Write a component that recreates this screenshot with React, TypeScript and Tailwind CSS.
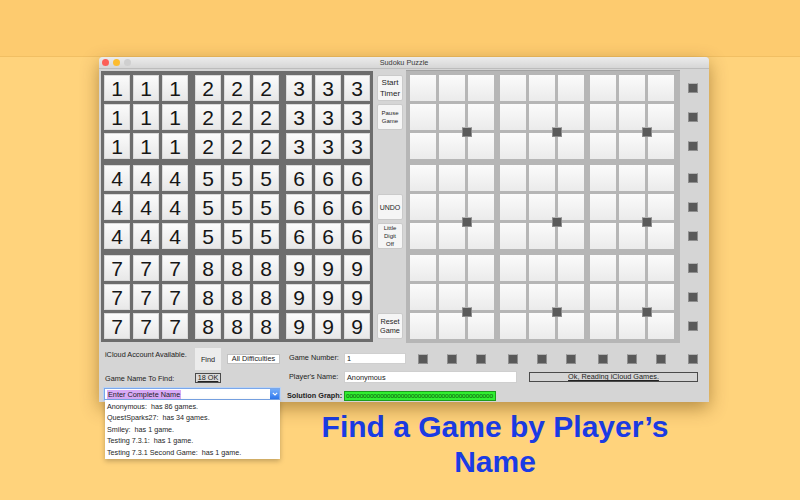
import React from "react";

const bands = [0, 1, 2];
const nine = Array.from({ length: 9 }, (_, i) => i);

// small dark square used for the note toggles
function Toggle() {
  return (
    <div className="w-[10px] h-[10px] bg-[#595959] border border-[#8e8e8e] border-t-[#b3b3b3]" />
  );
}

function NumberGrid() {
  return (
    <div className="ml-[2px] mt-[2px] bg-[#6d6d6d] pt-[4px] pb-[3px] px-[3px] flex flex-col gap-y-[6px]">
      {bands.map((br) => (
        <div key={br} className="flex gap-x-[7px]">
          {bands.map((bc) => (
            <div key={bc} className="grid grid-cols-3 gap-[3px]">
              {nine.map((i) => (
                <div
                  key={i}
                  className="w-[26px] h-[26px] flex items-center justify-center bg-linear-to-b from-[#fbfbfb] to-[#e8e8e8] border border-[#dadada] text-[21px] leading-none text-[#161616]"
                >
                  {br * 3 + bc + 1}
                </div>
              ))}
            </div>
          ))}
        </div>
      ))}
    </div>
  );
}

function NoteGrid() {
  return (
    <div className="ml-[3px] mt-[1px] bg-[#b6b6b6] border-t border-[#a2a2a2] pt-[4px] pb-[4px] pl-[4px] pr-[6px] flex flex-col gap-y-[6px]">
      {bands.map((br) => (
        <div key={br} className="flex gap-x-[6px]">
          {bands.map((bc) => (
            <div key={bc} className="relative grid grid-cols-3 gap-[3px]">
              {nine.map((i) => (
                <div
                  key={i}
                  className="w-[26px] h-[26px] bg-linear-to-b from-[#fbfbfb] to-[#ebebeb]"
                />
              ))}
              <div className="absolute left-[52px] top-[52px]">
                <Toggle />
              </div>
            </div>
          ))}
        </div>
      ))}
    </div>
  );
}

const sideButtons: (React.ReactNode | null)[] = [
  <span className="text-[8px] leading-[11px]">Start<br />Timer</span>,
  <span className="text-[6px] leading-[8px]">Pause<br />Game</span>,
  null,
  null,
  <span className="text-[7px] leading-[9px]">UNDO</span>,
  <span className="text-[6px] leading-[8px]">Little<br />Digit<br />Off</span>,
  null,
  null,
  <span className="text-[7.3px] leading-[9px]">Reset<br />Game</span>,
];

function SideButtons() {
  return (
    <div className="ml-[4px] mt-[6px] flex flex-col gap-y-[6px]">
      {bands.map((br) => (
        <div key={br} className="flex flex-col gap-y-[3px]">
          {bands.map((r) => {
            const label = sideButtons[br * 3 + r];
            return label ? (
              <button
                key={r}
                className="w-[26px] h-[26px] flex items-center justify-center text-center bg-[#f5f5f5] border border-[#cacaca] rounded-[2px] text-[#1e1e1e]"
              >
                {label}
              </button>
            ) : (
              <div key={r} className="w-[26px] h-[26px]" />
            );
          })}
        </div>
      ))}
    </div>
  );
}

function RowToggles() {
  return (
    <div className="ml-[8px] mt-[6px] flex flex-col gap-y-[6px]">
      {bands.map((br) => (
        <div key={br} className="flex flex-col gap-y-[3px]">
          {bands.map((r) => (
            <div key={r} className="h-[26px] flex items-center">
              <Toggle />
            </div>
          ))}
        </div>
      ))}
    </div>
  );
}

function ColumnToggles() {
  return (
    <div className="ml-[4px] flex items-center">
      <div className="flex gap-x-[6px]">
        {bands.map((b) => (
          <div key={b} className="flex gap-x-[3px]">
            {bands.map((c) => (
              <div key={c} className="w-[26px] flex justify-center">
                <Toggle />
              </div>
            ))}
          </div>
        ))}
      </div>
      <div className="ml-[14px]">
        <Toggle />
      </div>
    </div>
  );
}

const players = [
  "Anonymous:  has 86 games.",
  "QuestSparks27:  has 34 games.",
  "Smiley:  has 1 game.",
  "Testing 7.3.1:  has 1 game.",
  "Testing 7.3.1 Second Game:  has 1 game.",
];

function FindPanel() {
  return (
    <div className="w-[185px] shrink-0">
      <div className="flex h-[40px]">
        <div className="w-[96px] pl-[6px] flex flex-col text-[7.3px] leading-[10px] text-[#222]">
          <span className="mt-[7px]">iCloud Account Available.</span>
          <span className="mt-[14px]">Game Name To Find:</span>
        </div>
        <div className="flex flex-col">
          <button className="mt-[5px] w-[26px] h-[22px] bg-[#ececec] text-[7.3px] text-[#222] pt-[3px]">
            Find
          </button>
          <div className="mt-[3px] w-[26px] h-[10px] border border-[#4a4a4a] bg-[#dadada] flex items-center justify-center text-[7.3px] leading-none underline text-[#222]">
            18 OK
          </div>
        </div>
        <button className="ml-[6px] mt-[11px] w-[53px] h-[10px] bg-white border border-[#c2c2c2] text-[7.3px] leading-none text-[#222]">
          All Difficulties
        </button>
      </div>
      <div className="relative ml-[5px] mt-[5px] w-[176px] h-[12px] bg-white border border-[#7aa7ea] shadow-[0_0_0_1px_#b9d2f4] flex items-center">
        <span className="ml-[2px] px-[1px] bg-[#d8aaf6] text-[7.3px] leading-[9px] text-[#1e1e1e]">
          Enter Complete Name
        </span>
        <div className="ml-auto w-[9px] h-full bg-linear-to-b from-[#74acf8] to-[#2d77ee] flex items-center justify-center">
          <svg width="6" height="4" viewBox="0 0 6 4">
            <path d="M0.8 0.8 L3 3 L5.2 0.8" fill="none" stroke="#fff" strokeWidth="1.1" />
          </svg>
        </div>
        <div className="absolute left-0 top-[11px] w-[175px] bg-white shadow-[0_2px_5px_rgba(0,0,0,0.25)] z-10 pt-[0.5px] pb-[0.5px]">
          {players.map((p) => (
            <div key={p} className="pl-[2px] text-[7.2px] leading-[11.5px] whitespace-pre text-[#1e1e1e]">
              {p}
            </div>
          ))}
        </div>
      </div>
    </div>
  );
}

function GamePanel() {
  return (
    <div className="flex flex-col text-[7.3px] text-[#222]">
      <div className="mt-[10px] flex items-center h-[11px]">
        <span className="w-[60px] pl-[5px]">Game Number:</span>
        <div className="w-[62px] h-[11px] bg-white border border-[#cfcfcf] pl-[2px] leading-[10px]">1</div>
        <ColumnToggles />
      </div>
      <div className="mt-[7px] flex items-center h-[12px]">
        <span className="w-[60px] pl-[5px]">Player's Name:</span>
        <div className="w-[173px] h-[12px] bg-white border border-[#cfcfcf] pl-[2px] leading-[11px]">Anonymous</div>
        <div className="ml-[12px] w-[169px] h-[10px] border border-[#4a4a4a] flex items-center justify-center leading-none underline">
          Ok, Reading iCloud Games.
        </div>
      </div>
      <div className="mt-[8px] flex items-center h-[10px]">
        <span className="w-[60px] pl-[3px] font-bold">Solution Graph:</span>
        <div className="w-[152px] h-[10px] bg-[#31ee31] border border-[#1c9c1c] whitespace-nowrap text-[6.5px] leading-[8px] text-[#0c5c0c] tracking-[-0.2px] pl-[1px]">
          {"o".repeat(43)}
        </div>
      </div>
    </div>
  );
}

export default function App() {
  return (
    <div className="w-[800px] h-[500px] overflow-hidden bg-[#ffd37c] font-['Liberation_Sans',Arial,sans-serif]">
      <div className="h-[57px] bg-[#fdcb6f] border-b border-[#f1bf63]" />

      <div className="ml-[99px] w-[610px] h-[345px] bg-[#d5d5d5] rounded-t-[4px] shadow-[0_6px_18px_rgba(90,55,0,0.45)] relative z-0">
        {/* title bar */}
        <div className="h-[12px] grid grid-cols-[1fr_auto_1fr] items-center bg-linear-to-b from-[#ececec] to-[#d6d6d6] border-b border-[#bcbcbc] rounded-t-[4px]">
          <div className="flex gap-[4px] pl-[3px]">
            <span className="w-[7px] h-[7px] rounded-full bg-[#fc5f57]" />
            <span className="w-[7px] h-[7px] rounded-full bg-[#fdbc2e]" />
            <span className="w-[7px] h-[7px] rounded-full bg-[#cfcfcf]" />
          </div>
          <span className="text-[7.3px] leading-none text-[#3a3a3a]">Sudoku Puzzle</span>
          <div />
        </div>

        <div className="flex items-start">
          <NumberGrid />
          <SideButtons />
          <NoteGrid />
          <RowToggles />
        </div>

        <div className="flex">
          <FindPanel />
          <GamePanel />
        </div>
      </div>

      <div className="ml-[295px] w-[400px] mt-[7px] text-center font-bold text-[30px] leading-[35px] text-[#1a3be4]">
        Find a Game by Player’s Name
      </div>
    </div>
  );
}
